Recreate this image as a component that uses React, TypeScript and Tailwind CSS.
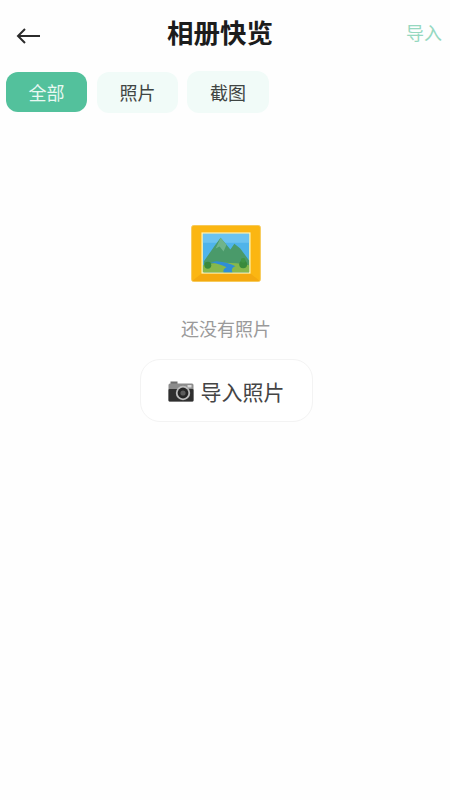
import React from "react";

const cjk = { fontFamily: '"Noto Sans CJK SC", sans-serif' };

function Picture() {
  return (
    <svg width="70" height="57" viewBox="0 0 71 58" className="block">
      <rect x="0.5" y="0.5" width="70" height="57" rx="2" fill="#fbb612" stroke="#f6c95a" />
      <path d="M1 57 L11 49 H60 L70 57 Z" fill="#f4a90f" />
      <rect x="10.5" y="7.5" width="50" height="42" fill="#fdf1ae" />
      <rect x="12" y="9" width="47" height="39" fill="#4fb4ea" />
      <path d="M12 9 H59 V18 H12 Z" fill="#6cc3ef" />
      <path d="M13 37 L24 21 L30 13 L36 20 L40 25 L44 19 L50 24 L59 36 V48 H13 Z" fill="#4a9a6a" />
      <path d="M30 13 L36 20 L33 27 L29 22 L25 24 Z" fill="#6fb48a" />
      <path d="M12 41 Q34 36 59 41 V48 H12 Z" fill="#86b84c" />
      <path d="M20 38 Q30 40 36 43 Q32 45 33 48 H42 Q40 44 45 42 Q38 38 26 37 Z" fill="#2f8ed6" />
      <circle cx="17" cy="41" r="3.5" fill="#3a8a3c" />
      <circle cx="53" cy="40" r="4" fill="#3a8a3c" />
      <circle cx="53" cy="36" r="2.5" fill="#3f9444" />
    </svg>
  );
}

function Camera() {
  return (
    <svg width="26" height="21" viewBox="0 0 26 21" className="block shrink-0">
      <rect x="2.5" y="0.5" width="7" height="3" fill="#6e6e6e" />
      <rect x="0.5" y="2.5" width="25" height="18" rx="1.5" fill="#8c8c8c" />
      <rect x="0.5" y="8" width="25" height="12.5" rx="1" fill="#2f2f2f" />
      <rect x="19.5" y="4" width="4" height="2.5" fill="#d9d9d9" />
      <circle cx="15" cy="12" r="7.2" fill="#bdbdbd" />
      <circle cx="15" cy="12" r="5.4" fill="#262626" />
      <circle cx="15" cy="12" r="2.6" fill="#5c5c5c" />
    </svg>
  );
}

export default function App() {
  return (
    <div className="flex min-h-[800px] w-[450px] flex-col bg-[#fefefe]" style={cjk}>
      <header className="flex h-[64px] items-center justify-between pl-4 pr-[8px]">
        <svg className="mt-2" width="26" height="20" viewBox="0 0 26 20" fill="none" stroke="#2b2b2b" strokeWidth="2">
          <path d="M24 10 H2 M9 3 L2 10 L9 17" />
        </svg>
        <h1 className="mr-2 text-[26.5px] font-bold leading-none text-[#1c1c1c]">相册快览</h1>
        <button className="text-lg leading-none text-[#96d8c0]">导入</button>
      </header>
      <nav className="mt-[7px] flex items-center gap-[10px] pl-[6px]">
        <button className="h-[40px] w-[81px] rounded-xl bg-[#53c19c] text-lg text-[#e8f8f2]">全部</button>
        <button className="h-[41px] w-[81px] rounded-xl bg-[#f1fbf8] text-lg text-[#3f4543]">照片</button>
        <button className="-ml-px h-[42px] w-[82px] rounded-xl bg-[#f1fbf8] text-lg text-[#3f4543]">截图</button>
      </nav>
      <main className="flex flex-col items-center pl-[2px] pt-[112px]">
        <Picture />
        <p className="mt-[33px] text-lg leading-[26px] text-[#9a9a9a]">还没有照片</p>
        <button className="mt-[18px] flex h-[63px] w-[173px] items-center justify-center gap-[7px] rounded-[20px] border border-[#f3f3f3] bg-white pt-[2px] text-[21px] text-[#444444]">
          <Camera />
          导入照片
        </button>
      </main>
    </div>
  );
}
